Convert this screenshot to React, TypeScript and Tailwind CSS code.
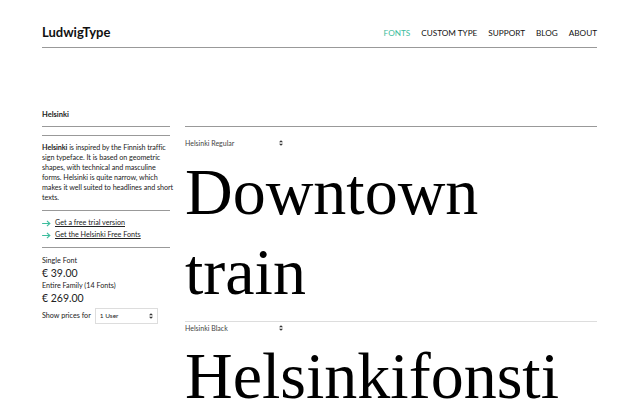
import React from 'react';

const sans = { fontFamily: 'Lato, "Open Sans", sans-serif' };

const UpDown = ({ className = '' }: { className?: string }) => (
  <svg viewBox="0 0 6 8" className={className} width="4" height="6">
    <path d="M3 0 L6 3 H0 Z M3 8 L0 5 H6 Z" fill="#333" />
  </svg>
);

const Arrow = () => (
  <svg viewBox="0 0 10 8" width="9" height="7" className="shrink-0">
    <path d="M0 4 H8.5 M5.5 1 L8.8 4 L5.5 7" stroke="#3dbd9d" strokeWidth="1.3" fill="none" />
  </svg>
);

const navItems = ['FONTS', 'CUSTOM TYPE', 'SUPPORT', 'BLOG', 'ABOUT'];

const Specimen = ({ label, text, first }: { label: string; text: React.ReactNode; first?: boolean }) => (
  <div className={first ? 'border-t border-[#999] pt-[10px]' : 'border-t border-[#ddd]'}>
    <div className="flex items-center w-[98px] justify-between h-[12px] text-[7px] text-[#444]">
      <span>{label}</span>
      <UpDown />
    </div>
    <div
      className={`text-[66px] leading-[80px] text-black whitespace-nowrap ${first ? 'mt-[3px] mb-[9px]' : 'mt-[2px]'}`}
      style={{ fontFamily: '"Liberation Serif", "Times New Roman", serif' }}
    >
      {text}
    </div>
  </div>
);

export default function App() {
  return (
    <div className="w-[640px] h-[400px] overflow-hidden bg-white text-[#222]" style={sans}>
      <div className="pl-[42px] pr-[43px]">
        {/* header */}
        <header className="flex items-end justify-between h-[48px] border-b border-[#999] pb-[8px]">
          <div className="text-[13px] font-bold text-[#111] leading-[14px]">LudwigType</div>
          <nav className="flex gap-[11px] text-[8.2px] leading-[12px] text-[#111]">
            {navItems.map((n, i) => (
              <span key={n} className={i === 0 ? 'text-[#3dbd9d]' : ''}>{n}</span>
            ))}
          </nav>
        </header>

        <div className="flex gap-[15px] pt-[62px]">
          {/* sidebar */}
          <aside className="w-[128px] shrink-0 text-[7.2px] leading-[10px]">
            <div className="font-bold text-[7.5px] border-b border-[#999] pb-[6px]">Helsinki</div>
            <div className="mt-[8px] border-t border-b border-[#999] pt-[7px] pb-[7px] whitespace-nowrap tracking-[-0.05px]">
              <b>Helsinki</b> is inspired by the Finnish traffic<br />
              sign typeface. It is based on geometric<br />
              shapes, with technical and masculine<br />
              forms. Helsinki is quite narrow, which<br />
              makes it well suited to headlines and short<br />
              texts.
            </div>
            <div className="pt-[7px] pb-[7px] border-b border-[#999] flex flex-col gap-[2px]">
              <a className="flex items-center gap-[4px] underline">
                <Arrow />
                <span>Get a free trial version</span>
              </a>
              <a className="flex items-center gap-[4px] underline">
                <Arrow />
                <span>Get the Helsinki Free Fonts</span>
              </a>
            </div>
            <div className="pt-[8px]">
              <div>Single Font</div>
              <div className="text-[10.5px] mt-[2px]">€ 39.00</div>
              <div className="mt-[3px]">Entire Family (14 Fonts)</div>
              <div className="text-[10.5px] mt-[2px]">€ 269.00</div>
              <div className="flex items-center gap-[4px] mt-[5px]">
                <span>Show prices for</span>
                <div className="w-[63px] h-[16px] border border-[#ddd] flex items-center justify-between px-[4px] text-[6.5px]">
                  <span>1 User</span>
                  <UpDown />
                </div>
              </div>
            </div>
          </aside>

          {/* main */}
          <main className="flex-1 min-w-0 mt-[16px]">
            <Specimen label="Helsinki Regular" first text={<>Downtown<br />train</>} />
            <Specimen label="Helsinki Black" text="Helsinkifonsti" />
          </main>
        </div>
      </div>
    </div>
  );
}
